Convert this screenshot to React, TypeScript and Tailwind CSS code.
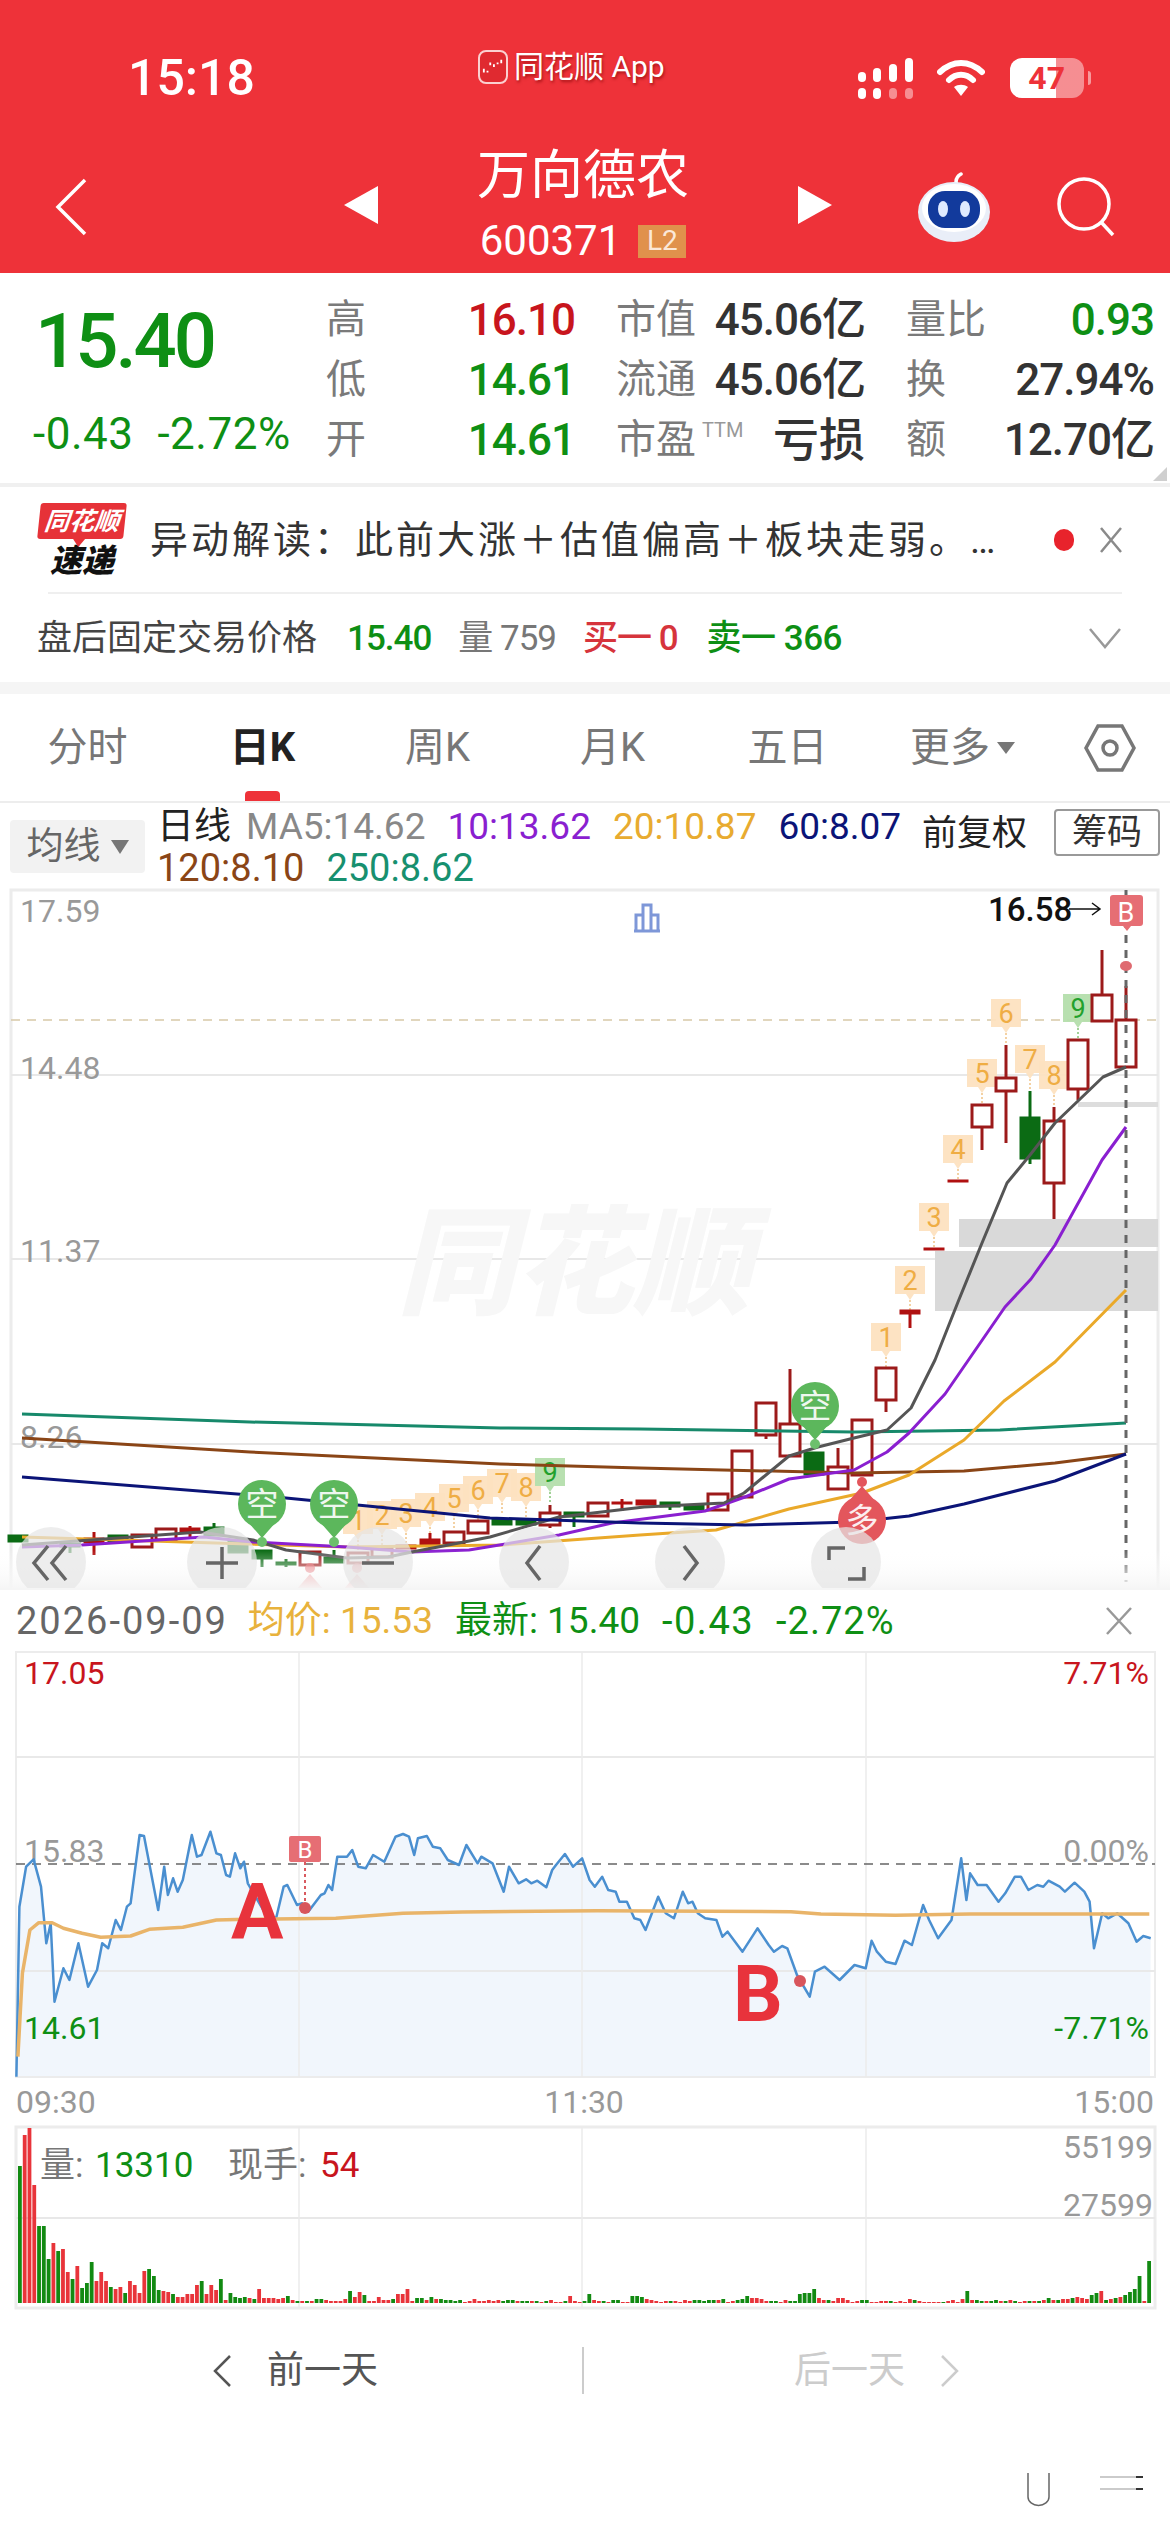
import * as React from "react"

const GREEN = "#0e8f14"
const RED = "#c8151d"

// [x, bodyTop, bodyBottom, wickTop, wickBottom, kind] r=hollow, g=green, f=red filled
type Candle = [number, number, number, number, number, "r" | "g" | "f"]
const candles: Candle[] = [
  [1126, 1020, 1067, 986, 1067, "r"],
  [1102, 995, 1021, 950, 1021, "r"],
  [1078, 1040, 1089, 1040, 1100, "r"],
  [1054, 1121, 1183, 1107, 1219, "r"],
  [1030, 1117, 1159, 1091, 1164, "g"],
  [1006, 1078, 1091, 1045, 1143, "r"],
  [982, 1105, 1127, 1105, 1150, "r"],
  [958, 1180, 1182, 1180, 1182, "f"],
  [934, 1248, 1250, 1248, 1250, "f"],
  [910, 1310, 1314, 1310, 1328, "f"],
  [886, 1368, 1400, 1368, 1412, "r"],
  [862, 1420, 1475, 1420, 1475, "r"],
  [838, 1467, 1489, 1448, 1489, "r"],
  [814, 1452, 1475, 1452, 1475, "g"],
  [790, 1424, 1456, 1369, 1456, "r"],
  [766, 1403, 1435, 1403, 1439, "r"],
  [742, 1451, 1497, 1451, 1497, "r"],
  [718, 1494, 1510, 1494, 1510, "r"],
  [694, 1505, 1510, 1505, 1510, "g"],
  [670, 1502, 1507, 1502, 1510, "g"],
  [646, 1500, 1505, 1500, 1505, "f"],
  [622, 1502, 1504, 1499, 1511, "f"],
  [598, 1503, 1516, 1503, 1516, "r"],
  [574, 1512, 1517, 1512, 1527, "g"],
  [550, 1513, 1525, 1505, 1528, "r"],
  [526, 1519, 1525, 1519, 1525, "g"],
  [502, 1519, 1525, 1519, 1525, "g"],
  [478, 1521, 1533, 1521, 1533, "r"],
  [454, 1532, 1543, 1532, 1543, "r"],
  [430, 1539, 1545, 1533, 1548, "f"],
  [406, 1545, 1549, 1545, 1549, "f"],
  [382, 1548, 1557, 1548, 1557, "r"],
  [358, 1553, 1563, 1553, 1563, "r"],
  [334, 1557, 1563, 1550, 1563, "g"],
  [310, 1552, 1565, 1552, 1565, "r"],
  [286, 1562, 1565, 1559, 1567, "g"],
  [262, 1550, 1559, 1550, 1567, "g"],
  [238, 1540, 1553, 1540, 1553, "g"],
  [214, 1527, 1536, 1523, 1536, "g"],
  [190, 1528, 1533, 1526, 1539, "f"],
  [166, 1529, 1540, 1529, 1540, "r"],
  [142, 1535, 1547, 1535, 1547, "r"],
  [118, 1535, 1542, 1535, 1542, "g"],
  [94, 1538, 1543, 1532, 1555, "f"],
  [70, 1543, 1547, 1543, 1553, "g"],
  [18, 1535, 1542, 1535, 1542, "g"],
]

const ma250 = "22,1414 250,1422 500,1428 640,1429 854,1432 1000,1430 1126,1423"
const ma120 = "22,1438 250,1452 500,1464 640,1468 854,1473 964,1471 1055,1463 1126,1454"
const ma60 =
  "22,1477 286,1498 490,1518 640,1523 745,1525 854,1522 909,1516 964,1504 1055,1481 1126,1454"
const ma20 =
  "22,1537 347,1547 502,1545 640,1535 716,1530 789,1509 862,1493 909,1475 964,1440 1004,1401 1055,1362 1126,1290"
const ma10 =
  "22,1547 82,1545 204,1537 253,1542 347,1547 412,1552 469,1550 559,1535 612,1523 705,1511 745,1497 789,1479 854,1470 887,1452 909,1433 945,1394 1005,1307 1031,1279 1055,1245 1102,1160 1126,1127"
const ma5 =
  "22,1545 200,1532 253,1540 286,1550 347,1558 388,1557 412,1552 490,1537 559,1517 644,1507 724,1503 744,1493 789,1456 818,1447 854,1438 887,1430 911,1408 935,1360 958,1302 982,1243 1007,1183 1030,1155 1055,1123 1079,1100 1103,1077 1126,1067"

const tdTags: [number, number, string][] = [
  [358, 1520, "1"],
  [382, 1515, "2"],
  [406, 1513, "3"],
  [430, 1507, "4"],
  [454, 1498, "5"],
  [478, 1490, "6"],
  [502, 1483, "7"],
  [526, 1487, "8"],
  [886, 1337, "1"],
  [910, 1280, "2"],
  [934, 1217, "3"],
  [958, 1149, "4"],
  [982, 1073, "5"],
  [1006, 1013, "6"],
  [1030, 1059, "7"],
  [1054, 1075, "8"],
]

// sampled at 1/3 vertical, 1.34 horizontal
const priceTrace = [
  22,1460,26,950,35,830,45,808,55,890,62,1060,68,1000,73,1235,85,1135,93,1170,105,1060,118,1190,130,1140,137,1060,145,1075,
  155,990,162,1020,170,950,175,940,187,735,193,738,212,960,220,830,225,915,232,865,238,905,245,870,257,735,264,800,270,795,
  282,725,290,790,296,795,303,855,308,860,315,790,322,835,327,815,332,880,345,930,358,980,370,985,380,890,385,885,398,945,405,940,
  413,965,430,915,435,910,440,885,445,900,452,800,465,800,472,780,480,830,490,835,500,795,515,815,530,740,540,732,548,740,
  555,795,560,745,572,738,580,770,590,775,600,810,615,825,625,765,640,820,645,800,660,820,675,905,682,830,695,880,705,868,
  712,880,720,872,732,892,740,840,745,825,757,792,768,830,780,805,790,870,797,890,807,860,815,900,825,905,830,935,840,935,
  850,985,858,990,865,1020,882,920,892,970,903,985,915,905,922,940,928,935,935,970,945,985,960,990,968,1040,975,1025,995,1085,
  1015,1015,1030,1065,1037,1085,1048,1068,1055,1075,1068,1155,1085,1220,1092,1145,1105,1130,1125,1170,1145,1125,1160,1135,
  1168,1052,1175,1085,1187,1115,1200,1122,1212,1052,1222,1065,1237,945,1245,990,1257,1045,1275,990,1288,805,1295,930,1300,850,
  1310,885,1322,885,1338,935,1347,910,1360,860,1368,860,1378,900,1390,885,1398,890,1405,872,1420,890,1427,905,1440,878,1453,905,
  1460,935,1466,1075,1477,970,1485,985,1497,970,1512,1000,1523,1055,1532,1038,1542,1045,
]
const avgTrace = [
  24,1400,30,1150,40,1020,52,998,70,998,85,1015,110,1030,135,1042,175,1038,200,1018,245,1012,290,990,330,988,450,985,540,970,
  620,966,800,962,1060,965,1100,972,1200,976,1300,972,1540,972,
]
const toPoints = (t: number[]) => {
  const out: string[] = []
  for (let i = 0; i < t.length; i += 2) out.push(`${(t[i] / 1.34).toFixed(1)},${(1590 + t[i + 1] / 3).toFixed(1)}`)
  return out.join(" ")
}

// positive = red, negative = green
const volumes = [
  -137,168,175,118,-77,-77,-44,60,-52,54,31,-24,37,-15,-20,-41,22,31,22,-16,14,16,-10,22,18,10,32,-34,-27,-13,12,11,-9,6,6,9,9,18,-22,9,18,13,-24,3,-10,-6,
  -5,-6,5,-4,14,5,5,5,4,5,-7,3,-2,2,-2,2,-4,-4,3,2,2,2,4,-12,6,11,-8,2,2,6,3,3,-4,9,9,14,2,-5,-5,3,-6,4,-4,-3,-3,-2,-3,1,2,4,2,2,3,2,3,-2,-3,-3,2,-2,-2,2,-2,1,-2,3,1,1,-2,7,
  2,1,-2,-9,3,2,-2,1,-3,-3,1,1,-7,-7,-6,4,3,2,1,2,-2,2,1,3,2,-3,-3,-2,-3,-3,3,-4,1,2,-3,-4,-7,5,5,4,2,-2,-2,1,3,-2,-2,-9,-10,-10,-14,5,3,-3,2,5,5,3,1,2,-3,-3,1,1,2,2,-2,1,2,1,4,-3,2,1,1,1,1,-1,2,3,1,4,-12,
  3,-3,-2,2,-2,-3,2,-2,3,-2,1,2,-2,2,-2,3,-5,3,-3,4,4,-5,6,5,4,-8,-10,12,-3,4,-5,6,-8,-11,-14,-27,2,-42,
]

function TdTag({ x, y, label, green }: { x: number; y: number; label: string; green?: boolean }) {
  const bg = green ? "#b5dfac" : "#fde2c0"
  return (
    <g opacity={0.95}>
      <path d={`M${x - 15} ${y - 14}h30v28h-11l-4 6-4-6h-11z`} fill={bg} />
      <line x1={x} y1={y + 20} x2={x} y2={y + 30} stroke={green ? "#7cc06f" : "#f0c080"} strokeWidth={1.5} strokeDasharray="2 2" />
      <text x={x} y={y + 10} textAnchor="middle" fontSize={27} fill={green ? "#169c22" : "#efa93a"}>
        {label}
      </text>
    </g>
  )
}

function Bubble({ x, y, label, up }: { x: number; y: number; label: string; up?: boolean }) {
  const fill = up ? "#e3565c" : "#5cb75c"
  const tipY = up ? y - 34 : y + 34
  return (
    <g>
      <circle cx={x} cy={y} r={24} fill={fill} />
      <path d={`M${x - 14} ${up ? y - 18 : y + 18}L${x} ${tipY}L${x + 14} ${up ? y - 18 : y + 18}z`} fill={fill} />
      <circle cx={x} cy={up ? y - 38 : y + 38} r={5} fill={up ? "#e3565c" : "#6cc06c"} />
      <text x={x} y={y + 12} textAnchor="middle" fontSize={33} fill="#fff" opacity={0.9}>
        {label}
      </text>
    </g>
  )
}

function KLineChart() {
  const ctrlY = 1562
  const ctrlX = [51, 222, 378, 534, 690, 846]
  return (
    <svg viewBox="0 885 1170 705" width={1170} height={705} className="block">
      <defs>
        <linearGradient id="fade" x1="0" y1="0" x2="0" y2="1">
          <stop offset="0" stopColor="#fff" stopOpacity={0} />
          <stop offset="1" stopColor="#f5f5f5" />
        </linearGradient>
      </defs>
      <rect x={11} y={890} width={1147} height={720} fill="none" stroke="#ececec" strokeWidth={3} />
      {[1075, 1259, 1444].map((y) => (
        <line key={y} x1={11} x2={1158} y1={y} y2={y} stroke="#e8e8e8" strokeWidth={2} />
      ))}
      <line x1={11} x2={1158} y1={1020} y2={1020} stroke="#d8c9a8" strokeWidth={1.5} strokeDasharray="9 7" />
      <text x={397} y={1305} fontSize={118} fontWeight={900} fontStyle="italic" fill="#f7f7f7">
        同花顺
      </text>
      <text x={20} y={922} fontSize={32} fill="#999">17.59</text>
      <text x={20} y={1079} fontSize={32} fill="#999">14.48</text>
      <text x={20} y={1262} fontSize={32} fill="#999">11.37</text>
      <text x={20} y={1448} fontSize={32} fill="#999">8.26</text>

      <g fill="none" stroke="#7e97d8" strokeWidth={3}>
        <path d="M634 931h26M636 931v-16h7v16M643 931v-26h8v26M651 931v-16h7v16" />
      </g>

      <rect x={959} y={1219} width={199} height={28} fill="#d9d9d9" />
      <rect x={935} y={1251} width={223} height={60} fill="#d9d9d9" />
      <rect x={1078} y={1102} width={80} height={5} fill="#dddddd" />

      {tdTags.map(([x, y, l], i) => (
        <TdTag key={i} x={x} y={y} label={l} />
      ))}
      <TdTag x={550} y={1472} label="9" green />
      <TdTag x={1078} y={1008} label="9" green />

      {candles.map(([x, t, b, wt, wb, k]) => {
        const c = k === "g" ? "#0b6b14" : k === "f" ? "#b01010" : "#9c1a1a"
        return (
          <g key={x}>
            <line x1={x} x2={x} y1={wt} y2={wb} stroke={c} strokeWidth={3} />
            <rect
              x={x - 10}
              y={t}
              width={20}
              height={b - t}
              fill={k === "r" ? "#fff" : c}
              stroke={c}
              strokeWidth={k === "r" ? 3 : 1}
            />
          </g>
        )
      })}

      <g fill="none" strokeWidth={3} strokeLinejoin="round">
        <polyline points={ma250} stroke="#17896b" />
        <polyline points={ma120} stroke="#8a4516" />
        <polyline points={ma20} stroke="#eaa92a" />
        <polyline points={ma10} stroke="#8a1fd0" />
        <polyline points={ma5} stroke="#555" />
        <polyline points={ma60} stroke="#0b1477" />
      </g>

      <Bubble x={262} y={1504} label="空" />
      <Bubble x={334} y={1504} label="空" />
      <Bubble x={815} y={1406} label="空" />
      <Bubble x={862} y={1520} label="多" up />
      {/* tips of the two bubbles cut off by the control bar */}
      <path d="M296 1590l14-16 14 16zM343 1590l14-16 14 16z" fill="#e3565c" opacity={0.6} />
      <circle cx={310} cy={1568} r={5} fill="#e3565c" opacity={0.7} />
      <circle cx={357} cy={1568} r={5} fill="#e3565c" opacity={0.7} />

      <line x1={1126} x2={1126} y1={890} y2={1582} stroke="#666" strokeWidth={3} strokeDasharray="8 7" />
      <ellipse cx={1126} cy={966} rx={6} ry={5} fill="#df6a70" />
      <text x={988} y={921} fontSize={33} fontWeight={500} fill="#111">16.58</text>
      <path d="M1069 909h30M1092 903l8 6-8 6" fill="none" stroke="#111" strokeWidth={1.5} />
      <path d="M1113 895h27a3 3 0 0 1 3 3v25a3 3 0 0 1-3 3h-9l-4 5-4-5h-10a3 3 0 0 1-3-3v-25a3 3 0 0 1 3-3z" fill="#e66e74" />
      <text x={1126} y={922} textAnchor="middle" fontSize={27} fill="#fff">B</text>

      <rect x={0} y={1550} width={1170} height={40} fill="url(#fade)" />
      {ctrlX.map((x) => (
        <circle key={x} cx={x} cy={ctrlY} r={35} fill="#e6e6e6" opacity={0.72} />
      ))}
      <g fill="none" stroke="#666" strokeWidth={3.5}>
        <path d="M48 1546l-14 17 14 17M66 1546l-14 17 14 17" />
        <path d="M206 1563h32M222 1547v32" />
        <path d="M362 1563h32" />
        <path d="M540 1546l-13 17 13 17" />
        <path d="M684 1546l13 17-13 17" />
        <path d="M829 1560v-12h16M864 1567v12h-16" />
      </g>
      <rect x={0} y={1588} width={1170} height={2} fill="#f5f5f5" />
    </svg>
  )
}

function IntradayChart() {
  const line = toPoints(priceTrace)
  return (
    <svg viewBox="0 1651 1170 472" width={1170} height={472} className="block">
      <polygon points={`${line} 1150,2077 16,2077`} fill="#f1f6fc" />
      <rect x={16} y={1652} width={1139} height={425} fill="none" stroke="#ececec" strokeWidth={2} />
      {[1757, 1971].map((y) => (
        <line key={y} x1={16} x2={1155} y1={y} y2={y} stroke="#e9e9e9" strokeWidth={2} />
      ))}
      {[299, 582, 866].map((x) => (
        <line key={x} x1={x} x2={x} y1={1652} y2={2077} stroke="#ebebeb" strokeWidth={1.5} />
      ))}
      <line x1={16} x2={1155} y1={1864} y2={1864} stroke="#666" strokeWidth={1.5} strokeDasharray="9 7" />
      <text x={24} y={1684} fontSize={32} fill={RED}>17.05</text>
      <text x={1149} y={1684} fontSize={32} fill={RED} textAnchor="end">7.71%</text>
      <text x={24} y={1862} fontSize={32} fill="#999">15.83</text>
      <text x={1149} y={1862} fontSize={32} fill="#999" textAnchor="end">0.00%</text>
      <text x={24} y={2039} fontSize={32} fill={GREEN}>14.61</text>
      <text x={1149} y={2039} fontSize={32} fill={GREEN} textAnchor="end">-7.71%</text>
      <polyline points={line} fill="none" stroke="#4a8fd0" strokeWidth={2.5} strokeLinejoin="round" />
      <polyline points={toPoints(avgTrace)} fill="none" stroke="#e9b469" strokeWidth={3.5} strokeLinejoin="round" />
      <text x={231} y={1939} fontSize={78} fontWeight={700} fill="#e8333c">A</text>
      <text x={733} y={2021} fontSize={78} fontWeight={700} fill="#e8333c">B</text>
      <rect x={289} y={1836} width={32} height={26} rx={2} fill="#e66e74" />
      <text x={305} y={1858} textAnchor="middle" fontSize={24} fill="#fff">B</text>
      <line x1={305} x2={305} y1={1862} y2={1908} stroke="#d95a60" strokeWidth={2} strokeDasharray="3 3" />
      <circle cx={305} cy={1908} r={6} fill="#d8555c" />
      <circle cx={800} cy={1981} r={6} fill="#d8555c" />
      <text x={16} y={2113} fontSize={32} fill="#999">09:30</text>
      <text x={584} y={2113} fontSize={32} fill="#999" textAnchor="middle">11:30</text>
      <text x={1154} y={2113} fontSize={32} fill="#999" textAnchor="end">15:00</text>
    </svg>
  )
}

function VolumeChart() {
  const step = 1134 / volumes.length
  return (
    <svg viewBox="0 2123 1170 190" width={1170} height={190} className="block">
      <rect x={16} y={2127} width={1139} height={181} fill="none" stroke="#ececec" strokeWidth={3} />
      <line x1={16} x2={1155} y1={2218} y2={2218} stroke="#e8e8e8" strokeWidth={2} />
      {[299, 582, 866].map((x) => (
        <line key={x} x1={x} x2={x} y1={2127} y2={2308} stroke="#ebebeb" strokeWidth={1.5} />
      ))}
      {volumes.map((v, i) => (
        <rect
          key={i}
          x={18 + i * step}
          y={2303 - Math.abs(v)}
          width={3.8}
          height={Math.abs(v)}
          fill={v > 0 ? "#e8343a" : "#128a12"}
        />
      ))}
      <text x={40} y={2177} fontSize={35} fill="#777">量:</text>
      <text x={95} y={2177} fontSize={35} fill={GREEN}>13310</text>
      <text x={228} y={2177} fontSize={35} fill="#777">现手:</text>
      <text x={320} y={2177} fontSize={35} fill={RED}>54</text>
      <text x={1153} y={2158} fontSize={32} fill="#999" textAnchor="end">55199</text>
      <text x={1153} y={2216} fontSize={32} fill="#999" textAnchor="end">27599</text>
    </svg>
  )
}

function StatusIcons() {
  const cols = [
    [862, 71],
    [877, 67],
    [893, 63],
    [909, 57],
  ]
  return (
    <div className="flex items-center">
      <svg viewBox="855 55 62 44" width={62} height={44}>
        {cols.map(([x, top], i) => (
          <g key={x} fill="#fff">
            <rect x={x - 4} y={top} width={8} height={81 - top} rx={4} />
            <rect x={x - 4} y={87} width={8} height={11} rx={4} opacity={i > 1 ? 0.45 : 1} />
          </g>
        ))}
      </svg>
      <svg viewBox="0 0 48 36" width={48} height={36} className="ml-[20px]">
        <path d="M3 12C16 0 32 0 45 12" fill="none" stroke="#fff" strokeWidth={6} strokeLinecap="round" />
        <path d="M12 20C19 13 29 13 36 20" fill="none" stroke="#fff" strokeWidth={6} strokeLinecap="round" />
        <path d="M24 36l-7-9c4-3 10-3 14 0z" fill="#fff" />
      </svg>
      <div className="ml-[25px] flex h-[40px] w-[74px] items-center justify-center rounded-[12px] bg-[linear-gradient(90deg,#fff_62%,rgba(255,255,255,0.45)_62%)] text-[32px] leading-none font-bold text-[#ee3239]">
        47
      </div>
      <div className="ml-[4px] h-[14px] w-[3px] rounded-r bg-white/50" />
    </div>
  )
}

function Robot() {
  return (
    <svg viewBox="0 0 72 70" width={72} height={70}>
      <path d="M39 14c-2-5-1-9 4-12" fill="none" stroke="#fff" strokeWidth={3.5} strokeLinecap="round" />
      <ellipse cx={36} cy={40} rx={36} ry={30} fill="#e9eef8" />
      <ellipse cx={36} cy={36} rx={32} ry={24} fill="#fff" />
      <rect x={10} y={19} width={52} height={37} rx={17} fill="#123a9c" />
      <ellipse cx={25} cy={37} rx={5} ry={8} fill="#dfeaff" />
      <ellipse cx={47} cy={37} rx={5} ry={8} fill="#dfeaff" />
    </svg>
  )
}

function Cell({ label, value, valueClass }: { label: React.ReactNode; value: string; valueClass: string }) {
  return (
    <div className="flex items-center justify-between">
      <span className="flex items-start text-[40px] leading-none text-[#7a7a7a]">{label}</span>
      <span className={`leading-none ${valueClass}`}>{value}</span>
    </div>
  )
}

const num = "text-[44px] font-medium tracking-[-1px]"

export default function App() {
  return (
    <div className="h-[2532px] w-[1170px] overflow-hidden bg-white [font-family:Roboto,'Noto_Sans_CJK_SC',sans-serif]">
      <header className="h-[273px] bg-[#ee3239] text-white">
        <div className="flex h-[136px] items-center pt-[20px] pl-[128px]">
          <span className="w-[350px] text-[50px] leading-none font-medium">15:18</span>
          <div className="mb-[22px] flex items-center text-[30px] leading-none [text-shadow:1px_2px_3px_rgba(120,0,0,0.6)]">
            <div className="flex h-[34px] w-[30px] items-center justify-center rounded-[8px] border-2 border-[#fbd0d0] bg-[#e02a30] text-[8px]">
              <svg viewBox="0 0 24 24" width={22} height={22}>
                <path d="M2 18v-4M6 18v-2M9 10v-3M13 12v-3M17 9v-2M21 8V4" stroke="#fff" strokeWidth={2} />
              </svg>
            </div>
            <span className="ml-[6px]">同花顺 App</span>
          </div>
          <div className="ml-[190px]">
            <StatusIcons />
          </div>
        </div>
        <div className="flex h-[137px] pl-[55px]">
          <svg viewBox="0 0 32 58" width={32} height={58} className="mt-[42px]">
            <path d="M30 2L3 29l27 27" fill="none" stroke="#fff" strokeWidth={3.5} />
          </svg>
          <svg viewBox="0 0 34 38" width={34} height={38} className="mt-[50px] ml-[257px]">
            <path d="M34 0v38L0 19z" fill="#fff" />
          </svg>
          <div className="flex w-[410px] flex-col items-center pt-[10px]">
            <div className="h-[60px] text-[53px] leading-[60px]">万向德农</div>
            <div className="mt-[15px] flex h-[40px] items-center">
              <span className="text-[42px] leading-none">600371</span>
              <span className="ml-[17px] flex h-[33px] w-[48px] items-center justify-center bg-[#e0914c] text-[28px] leading-none text-[#fbe8d8]">
                L2
              </span>
            </div>
          </div>
          <svg viewBox="0 0 34 38" width={34} height={38} className="mt-[50px] ml-[10px]">
            <path d="M0 0v38l34-19z" fill="#fff" />
          </svg>
          <div className="mt-[36px] ml-[86px]">
            <Robot />
          </div>
          <svg viewBox="0 0 58 60" width={58} height={60} className="mt-[41px] ml-[67px]">
            <circle cx={27} cy={27} r={25} fill="none" stroke="#fff" strokeWidth={3.5} />
            <path d="M44 45l12 13" stroke="#fff" strokeWidth={3.5} />
          </svg>
        </div>
      </header>

      <section className="relative flex h-[210px]">
        <div className="w-[326px] pl-[33px] text-[#0e8f14]">
          <div className="mt-[28px] h-[80px] pl-[2px] text-[76px] leading-[80px] font-medium tracking-[-3px]">15.40</div>
          <div className="mt-[31px] flex h-[44px] items-center text-[44px] leading-none tracking-[0.5px]">
            <span>-0.43</span>
            <span className="ml-[24px]">-2.72%</span>
          </div>
        </div>
        <div className="mt-[17px] grid auto-rows-[60px] grid-cols-[249px_249px_248px] gap-x-[41px]">
          <Cell label="高" value="16.10" valueClass={`${num} text-[#c8151d]`} />
          <Cell label="市值" value="45.06亿" valueClass={`${num} text-[#333]`} />
          <Cell label="量比" value="0.93" valueClass={`${num} text-[#0e8f14]`} />
          <Cell label="低" value="14.61" valueClass={`${num} text-[#0e8f14]`} />
          <Cell label="流通" value="45.06亿" valueClass={`${num} text-[#333]`} />
          <Cell label="换" value="27.94%" valueClass={`${num} text-[#333]`} />
          <Cell label="开" value="14.61" valueClass={`${num} text-[#0e8f14]`} />
          <Cell
            label={
              <>
                市盈<span className="ml-[6px] text-[20px] text-[#999]">TTM</span>
              </>
            }
            value="亏损"
            valueClass="text-[46px] font-medium text-[#333]"
          />
          <Cell label="额" value="12.70亿" valueClass={`${num} text-[#333]`} />
        </div>
        <svg viewBox="0 0 14 14" width={14} height={14} className="absolute right-[3px] bottom-[2px]">
          <path d="M14 0v14H0z" fill="#cfcfcf" />
        </svg>
      </section>

      <div className="h-[4px] bg-[#f0f0f0]" />

      <div className="flex h-[105px] items-center pl-[38px]">
        <div className="flex w-[88px] flex-col items-center">
          <div className="relative flex h-[36px] w-[86px] -skew-x-6 items-center justify-center rounded-[3px] bg-[#e63238] text-[25px] leading-none font-bold text-white italic">
            同花顺
            <div className="absolute -bottom-[8px] left-[36px] h-0 w-0 border-x-[6px] border-t-[8px] border-x-transparent border-t-[#e63238]" />
          </div>
          <div className="mt-[6px] text-[32px] leading-none font-black text-[#111] italic">速递</div>
        </div>
        <div className="ml-[24px] w-[883px] text-[38px] leading-none tracking-[3px] whitespace-nowrap text-[#333]">
          异动解读：此前大涨＋估值偏高＋板块走弱。…
        </div>
        <div className="ml-[21px] h-[22px] w-[20px] rounded-full bg-[#e8232c]" />
        <svg viewBox="0 0 24 26" width={24} height={26} className="ml-[25px]">
          <path d="M2 1l20 24M22 1L2 25" stroke="#8a8a8a" strokeWidth={2.5} />
        </svg>
      </div>

      <div className="mx-[48px] h-[2px] bg-[#efefef]" />

      <div className="flex h-[88px] items-center pl-[37px] text-[35px] leading-none">
        <span className="text-[#444]">盘后固定交易价格</span>
        <span className="ml-[30px] font-medium tracking-[-1px] text-[#0e8f14]">15.40</span>
        <span className="ml-[27px] tracking-[-1px] text-[#777]">量 759</span>
        <span className="ml-[27px] font-medium tracking-[-1px] text-[#d6343c]">买一 0</span>
        <span className="ml-[29px] font-medium tracking-[-0.5px] text-[#0e8f14]">卖一 366</span>
        <svg viewBox="0 0 34 22" width={34} height={22} className="mr-[48px] ml-auto">
          <path d="M2 2l15 18L32 2" fill="none" stroke="#999" strokeWidth={2.5} />
        </svg>
      </div>

      <div className="h-[12px] bg-[#f5f5f5]" />

      <nav className="flex h-[109px] border-b-2 border-[#ededed]">
        <div className="grid w-[1050px] grid-cols-6 text-[40px] leading-none text-[#777]">
          <div className="flex items-center justify-center">分时</div>
          <div className="relative flex items-center justify-center font-bold text-[#222]">
            日K
            <div className="absolute bottom-0 left-[70px] h-[10px] w-[35px] rounded-t-[4px] bg-[#ee3239]" />
          </div>
          <div className="flex items-center justify-center">周K</div>
          <div className="flex items-center justify-center">月K</div>
          <div className="flex items-center justify-center">五日</div>
          <div className="flex items-center justify-center">
            更多
            <svg viewBox="0 0 18 12" width={18} height={12} className="ml-[7px]">
              <path d="M0 0h18L9 12z" fill="#777" />
            </svg>
          </div>
        </div>
        <div className="flex w-[120px] items-center justify-center">
          <svg viewBox="0 0 52 48" width={52} height={48}>
            <path d="M14 2h24l12 22-12 22H14L2 24z" fill="none" stroke="#777" strokeWidth={3.5} />
            <circle cx={26} cy={24} r={7} fill="none" stroke="#777" strokeWidth={3.5} />
          </svg>
        </div>
      </nav>

      <div className="flex h-[82px] text-[37px] leading-none">
        <div className="mt-[17px] ml-[10px] flex h-[53px] w-[135px] items-center justify-center rounded-[4px] bg-[#f2f2f2] text-[#666]">
          均线
          <svg viewBox="0 0 18 14" width={18} height={14} className="ml-[10px]">
            <path d="M0 0h18L9 14z" fill="#777" />
          </svg>
        </div>
        <div className="ml-[12px] w-[765px]">
          <div className="mt-[2px] flex h-[42px] items-center gap-x-[22px]">
            <span className="-mr-[7px] text-[#222]">日线</span>
            <span className="text-[#888]">MA5:14.62</span>
            <span className="text-[#8a1fd0]">10:13.62</span>
            <span className="text-[#e8ab30]">20:10.87</span>
            <span className="text-[#0b1477]">60:8.07</span>
          </div>
          <div className="flex h-[41px] items-center gap-x-[22px] text-[38px]">
            <span className="text-[#8a4516]">120:8.10</span>
            <span className="text-[#17906f]">250:8.62</span>
          </div>
        </div>
        <div className="mt-[9px] text-[#222]">
          <div className="flex h-[42px] w-[110px] items-center text-[35px]">前复权</div>
        </div>
        <div className="mt-[6px] ml-[22px] flex h-[47px] w-[106px] items-center justify-center rounded-[4px] border-2 border-[#999] text-[35px] text-[#333]">
          筹码
        </div>
      </div>

      <KLineChart />

      <div className="flex h-[61px] items-center pl-[16px] text-[37px] leading-none">
        <span className="text-[38px] tracking-[2px] text-[#666]">2026-09-09</span>
        <span className="ml-[20px] text-[#e8b23c]">均价: 15.53</span>
        <span className="ml-[22px] text-[#0e8f14]">最新: 15.40</span>
        <span className="ml-[22px] text-[38px] tracking-[1.5px] text-[#0e8f14]">-0.43</span>
        <span className="ml-[22px] text-[38px] tracking-[1px] text-[#0e8f14]">-2.72%</span>
        <svg viewBox="0 0 28 28" width={28} height={28} className="mr-[37px] ml-auto">
          <path d="M2 1l24 26M26 1L2 27" stroke="#999" strokeWidth={2.5} />
        </svg>
      </div>

      <IntradayChart />
      <VolumeChart />

      <footer className="mt-[34px] flex h-[47px] items-center text-[37px] leading-none">
        <div className="flex w-[582px] items-center justify-center pl-[8px] text-[#555]">
          <svg viewBox="0 0 20 32" width={20} height={32}>
            <path d="M18 1L3 16l15 15" fill="none" stroke="#555" strokeWidth={2.5} />
          </svg>
          <span className="ml-[35px]">前一天</span>
        </div>
        <div className="h-[47px] w-[2px] bg-[#ccc]" />
        <div className="flex flex-1 items-center justify-center text-[#ccc]">
          <span>后一天</span>
          <svg viewBox="0 0 20 32" width={20} height={32} className="ml-[35px]">
            <path d="M2 1l15 15L2 31" fill="none" stroke="#ccc" strokeWidth={2.5} />
          </svg>
        </div>
      </footer>

      <div className="mt-[77px] ml-[955px]">
        <svg viewBox="955 2473 190 36" width={190} height={36}>
          <path d="M1028 2475v24a10 8 0 0 0 21 0v-24" fill="none" stroke="#666" strokeWidth={1.5} />
          <path d="M1100 2479h43M1100 2491h43" stroke="#bbb" strokeWidth={1.5} />
          <path d="M1136 2479h7M1136 2491h7" stroke="#333" strokeWidth={2} />
        </svg>
      </div>
    </div>
  )
}
